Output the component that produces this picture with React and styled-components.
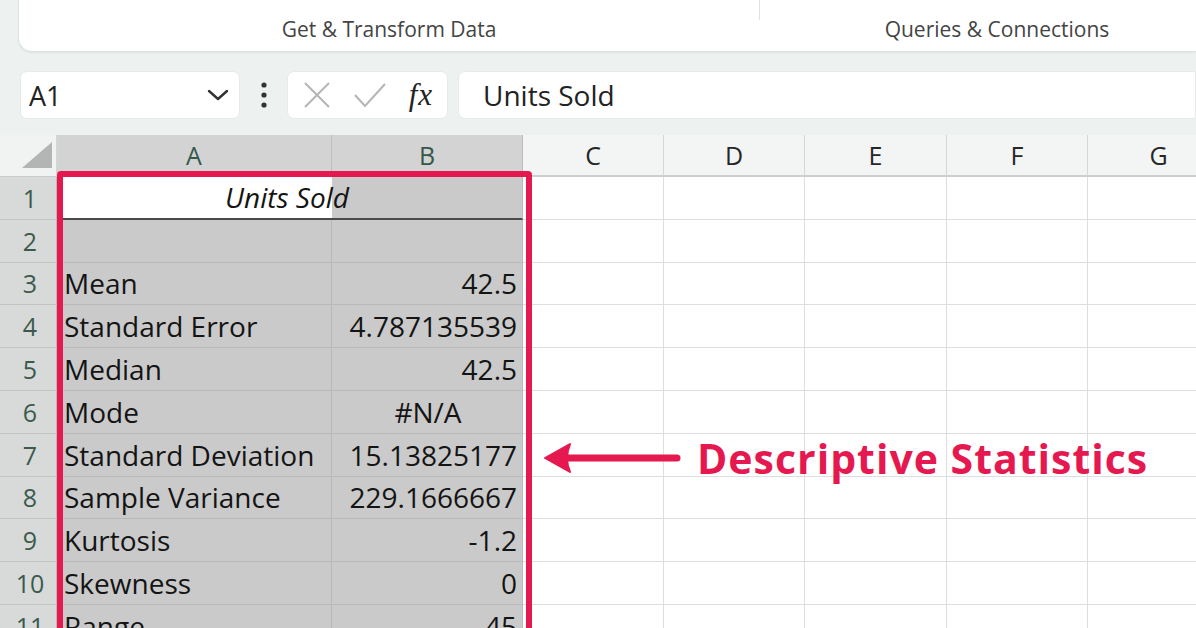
import React from "react";
import styled, { createGlobalStyle } from "styled-components";

const Global = createGlobalStyle`
  html, body { margin: 0; padding: 0; }
  body {
    background: #edf2f1;
    font-family: "Open Sans", "Noto Sans", sans-serif;
    width: 1196px;
    height: 628px;
    overflow: hidden;
  }
`;

const Page = styled.div`
  width: 1196px;
  height: 628px;
  overflow: hidden;
  display: flex;
  flex-direction: column;
  background: #edf2f1;
`;

const Ribbon = styled.div`
  margin-left: 18px;
  height: 52px;
  background: #ffffff;
  border-bottom-left-radius: 14px;
  border: 1px solid #dde4e3;
  border-top: none;
  border-right: none;
  box-shadow: 0 1px 2px rgba(0, 0, 0, 0.06);
  display: flex;
  box-sizing: border-box;
`;

const RibbonGroup = styled.div`
  width: ${(p) => p.$w}px;
  flex: none;
  display: flex;
  align-items: flex-end;
  justify-content: center;
  padding-bottom: 8px;
  box-sizing: border-box;
  font-size: 21px;
  color: #444;
`;

const SepTop = styled.div`
  height: 20px;
  width: 1px;
  background: #e0e0e0;
  flex: none;
`;

const FormulaRow = styled.div`
  display: flex;
  align-items: center;
  margin-top: 18px;
  height: 50px;
  padding-left: 20px;
`;

const Box = styled.div`
  height: 48px;
  background: #ffffff;
  border-radius: 7px;
  display: flex;
  align-items: center;
  box-sizing: border-box;
  border: 1px solid #e6eaea;
`;

const NameBox = styled(Box)`
  width: 220px;
  padding: 0 10px 0 8px;
  justify-content: space-between;
  font-size: 27px;
  color: #222;
`;

const Dots = styled.div`
  width: 47px;
  display: flex;
  justify-content: center;
`;

const FxBox = styled(Box)`
  width: 161px;
  padding: 0 14px 0 14px;
  justify-content: space-between;
`;

const Fx = styled.span`
  font-family: "Liberation Serif", "DejaVu Serif", serif;
  font-style: italic;
  font-size: 31px;
  color: #222;
  letter-spacing: 1px;
`;

const FormulaBox = styled(Box)`
  flex: 1;
  margin-left: 10px;
  padding-left: 24px;
  font-size: 28px;
  color: #222;
  border-top-right-radius: 0;
  border-bottom-right-radius: 0;
`;

const SheetWrap = styled.div`
  position: relative;
  margin-top: 15px;
  flex: 1;
  overflow: hidden;
`;

const Grid = styled.div`
  display: grid;
  grid-template-columns: 57px 275px 191px 141px 141px 142px 141px 142px;
  grid-template-rows: 42px repeat(11, 42.8px);
`;

const Corner = styled.div`
  background: #f1f3f3;
  border-right: 1px solid #d4d6d6;
  border-bottom: 1px solid #c9cccc;
  display: flex;
  align-items: flex-end;
  justify-content: flex-end;
  padding: 0 4px 8px 0;
`;

const ColHead = styled.div`
  background: ${(p) => (p.$sel ? "#d3d3d3" : "#f3f4f4")};
  border-right: 1px solid ${(p) => (p.$sel ? "#bdbdbd" : "#d6d6d6")};
  border-bottom: 2px solid ${(p) => (p.$sel ? "#b4b4b4" : "#cdcfcf")};
  display: flex;
  align-items: center;
  justify-content: center;
  font-size: 25px;
  color: ${(p) => (p.$sel ? "#35584a" : "#262626")};
  box-sizing: border-box;
`;

const RowHead = styled.div`
  background: #d8dada;
  border-bottom: 1px solid #c2c4c4;
  border-right: 1px solid #b8baba;
  display: flex;
  align-items: center;
  justify-content: center;
  padding-left: 4px;
  font-size: 25px;
  color: #3b5a4c;
  box-sizing: border-box;
`;

const Cell = styled.div`
  background: ${(p) => (p.$sel ? "#cacaca" : "#ffffff")};
  border-right: 1px solid ${(p) => (p.$sel ? "#b9b9b9" : "#dedede")};
  border-bottom: 1px solid ${(p) => (p.$sel ? "#b9b9b9" : "#dedede")};
  display: flex;
  align-items: center;
  justify-content: ${(p) =>
    p.$align === "right" ? "flex-end" : p.$align === "center" ? "center" : "flex-start"};
  padding: 0 5px 0 7px;
  font-size: 28px;
  font-weight: 500;
  color: #141414;
  box-sizing: border-box;
  white-space: nowrap;
`;

const TitleCell = styled(Cell)`
  grid-column: span 2;
  justify-content: center;
  font-style: italic;
  background: linear-gradient(to right, #ffffff 275px, #cacaca 275px);
  border-bottom: 2px solid #4a4a4a;
  padding-right: 12px;
`;

const Highlight = styled.div`
  position: absolute;
  left: 57px;
  top: 36px;
  width: 475px;
  height: 520px;
  border: 6px solid #e5194f;
  border-radius: 4px;
  box-sizing: border-box;
  pointer-events: none;
`;

const Callout = styled.div`
  position: absolute;
  left: 543px;
  top: 299px;
  display: flex;
  align-items: center;
  gap: 16px;
`;

const CalloutText = styled.span`
  font-family: "Open Sans", sans-serif;
  font-weight: 700;
  font-size: 41px;
  letter-spacing: 1px;
  color: #e5194f;
  line-height: 48px;
`;

const cols = ["A", "B", "C", "D", "E", "F", "G"];

const rows = [
  ["Mean", "42.5", "right"],
  ["Standard Error", "4.787135539", "right"],
  ["Median", "42.5", "right"],
  ["Mode", "#N/A", "center"],
  ["Standard Deviation", "15.13825177", "right"],
  ["Sample Variance", "229.1666667", "right"],
  ["Kurtosis", "-1.2", "right"],
  ["Skewness", "0", "right"],
  ["Range", "45", "right"],
];

function Chevron() {
  return (
    <svg width="22" height="14" viewBox="0 0 22 14">
      <path d="M2 3 L11 11 L20 3" fill="none" stroke="#333" strokeWidth="2.4" strokeLinecap="round" strokeLinejoin="round" />
    </svg>
  );
}

function VDots() {
  return (
    <svg width="8" height="28" viewBox="0 0 8 28">
      <circle cx="4" cy="4" r="2.6" fill="#333" />
      <circle cx="4" cy="14" r="2.6" fill="#333" />
      <circle cx="4" cy="24" r="2.6" fill="#333" />
    </svg>
  );
}

function XIcon() {
  return (
    <svg width="30" height="30" viewBox="0 0 30 30">
      <path d="M3 3 L27 27 M27 3 L3 27" stroke="#b5b5b5" strokeWidth="2" fill="none" />
    </svg>
  );
}

function CheckIcon() {
  return (
    <svg width="34" height="28" viewBox="0 0 34 28">
      <path d="M2 14 L12 25 L32 3" stroke="#b5b5b5" strokeWidth="2" fill="none" />
    </svg>
  );
}

function CornerTri() {
  return (
    <svg width="30" height="26" viewBox="0 0 30 26">
      <polygon points="30,0 30,26 0,26" fill="#b3b5b5" />
    </svg>
  );
}

function Arrow() {
  return (
    <svg width="138" height="34" viewBox="0 0 138 34">
      <path d="M26 17 L134 17" stroke="#e5194f" strokeWidth="7" strokeLinecap="round" />
      <path d="M2 17 L27 3 Q21 17 27 31 Z" fill="#e5194f" stroke="#e5194f" strokeWidth="2" strokeLinejoin="round" />
    </svg>
  );
}

export default function App() {
  return (
    <Page>
      <Global />
      <Ribbon>
        <RibbonGroup $w={740}>Get &amp; Transform Data</RibbonGroup>
        <SepTop />
        <RibbonGroup $w={474}>Queries &amp; Connections</RibbonGroup>
      </Ribbon>
      <FormulaRow>
        <NameBox>
          <span>A1</span>
          <Chevron />
        </NameBox>
        <Dots>
          <VDots />
        </Dots>
        <FxBox>
          <XIcon />
          <CheckIcon />
          <Fx>fx</Fx>
        </FxBox>
        <FormulaBox>Units Sold</FormulaBox>
      </FormulaRow>
      <SheetWrap>
        <Grid>
          <Corner>
            <CornerTri />
          </Corner>
          {cols.map((c, i) => (
            <ColHead key={c} $sel={i < 2}>
              {c}
            </ColHead>
          ))}
          <RowHead>1</RowHead>
          <TitleCell $sel>Units Sold</TitleCell>
          {cols.slice(2).map((c) => (
            <Cell key={"1" + c} />
          ))}
          <RowHead>2</RowHead>
          <Cell $sel />
          <Cell $sel />
          {cols.slice(2).map((c) => (
            <Cell key={"2" + c} />
          ))}
          {rows.map(([label, value, align], i) => (
            <React.Fragment key={label}>
              <RowHead>{i + 3}</RowHead>
              <Cell $sel>{label}</Cell>
              <Cell $sel $align={align}>
                {value}
              </Cell>
              {cols.slice(2).map((c) => (
                <Cell key={label + c} />
              ))}
            </React.Fragment>
          ))}
        </Grid>
        <Highlight />
        <Callout>
          <Arrow />
          <CalloutText>Descriptive Statistics</CalloutText>
        </Callout>
      </SheetWrap>
    </Page>
  );
}
